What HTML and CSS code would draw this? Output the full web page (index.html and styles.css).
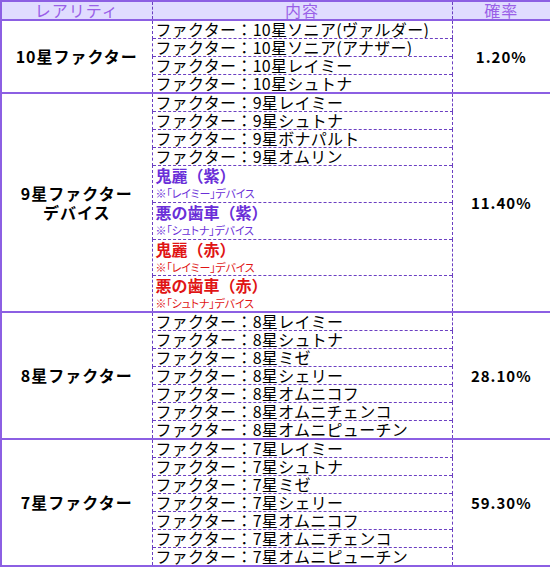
FILE: index.html
```html
<!DOCTYPE html>
<html lang="ja">
<head>
<meta charset="utf-8">
<title>レアリティ</title>
<link rel="stylesheet" href="styles.css">
</head>
<body>
<table class="rarity">
  <colgroup>
    <col class="c1"><col class="c2"><col class="c3">
  </colgroup>
  <thead>
    <tr><th>レアリティ</th><th>内容</th><th>確率</th></tr>
  </thead>
  <tbody>
    <tr><td class="name" rowspan="4">10星ファクター</td><td class="item">ファクター：10星ソニア(ヴァルダー)</td><td class="rate" rowspan="4">1.20%</td></tr>
    <tr><td class="item">ファクター：10星ソニア(アナザー)</td></tr>
    <tr><td class="item">ファクター：10星レイミー</td></tr>
    <tr><td class="item">ファクター：10星シュトナ</td></tr>
  </tbody>
  <tbody>
    <tr><td class="name" rowspan="8">9星ファクター<br>デバイス</td><td class="item">ファクター：9星レイミー</td><td class="rate" rowspan="8">11.40%</td></tr>
    <tr><td class="item">ファクター：9星シュトナ</td></tr>
    <tr><td class="item">ファクター：9星ボナパルト</td></tr>
    <tr><td class="item">ファクター：9星オムリン</td></tr>
    <tr><td class="item dev purple tall"><div class="dev-title">鬼麗（紫）</div><div class="dev-note">※「レイミー」デバイス</div></td></tr>
    <tr><td class="item dev purple tall"><div class="dev-title">悪の歯車（紫）</div><div class="dev-note">※「シュトナ」デバイス</div></td></tr>
    <tr><td class="item dev red"><div class="dev-title">鬼麗（赤）</div><div class="dev-note">※「レイミー」デバイス</div></td></tr>
    <tr><td class="item dev red"><div class="dev-title">悪の歯車（赤）</div><div class="dev-note">※「シュトナ」デバイス</div></td></tr>
  </tbody>
  <tbody>
    <tr><td class="name" rowspan="7">8星ファクター</td><td class="item">ファクター：8星レイミー</td><td class="rate" rowspan="7">28.10%</td></tr>
    <tr><td class="item">ファクター：8星シュトナ</td></tr>
    <tr><td class="item">ファクター：8星ミゼ</td></tr>
    <tr><td class="item">ファクター：8星シェリー</td></tr>
    <tr><td class="item">ファクター：8星オムニコフ</td></tr>
    <tr><td class="item">ファクター：8星オムニチェンコ</td></tr>
    <tr><td class="item">ファクター：8星オムニピューチン</td></tr>
  </tbody>
  <tbody>
    <tr><td class="name" rowspan="7">7星ファクター</td><td class="item">ファクター：7星レイミー</td><td class="rate" rowspan="7">59.30%</td></tr>
    <tr><td class="item">ファクター：7星シュトナ</td></tr>
    <tr><td class="item">ファクター：7星ミゼ</td></tr>
    <tr><td class="item">ファクター：7星シェリー</td></tr>
    <tr><td class="item">ファクター：7星オムニコフ</td></tr>
    <tr><td class="item">ファクター：7星オムニチェンコ</td></tr>
    <tr><td class="item">ファクター：7星オムニピューチン</td></tr>
  </tbody>
</table>
</body>
</html>
```
FILE: styles.css
```css
html, body {
  margin: 0;
  padding: 0;
  background: #ffffff;
}

.rarity {
  border-collapse: collapse;
  table-layout: fixed;
  width: 550px;
  border: 2px solid #8c5fe3;
  font-family: "Noto Sans CJK JP", "DejaVu Sans", sans-serif;
  color: #000;
}

.c1 { width: 151px; }
.c2 { width: 300px; }
.c3 { width: 99px; }

.rarity th {
  background: #e0dcff;
  color: #9a5fe8;
  font-weight: normal;
  font-size: 16px;
  line-height: 17px;
  height: 16px;
  padding: 0;
  text-align: center;
  letter-spacing: 1px;
  border-bottom: 2px solid #8c5fe3;
  border-left: 1px dashed #6b3fc2;
  border-right: 1px dashed #6b3fc2;
}

.rarity tbody {
  border-top: 2px solid #8c5fe3;
}

.rarity td {
  padding: 0;
  vertical-align: middle;
}

.name {
  text-align: center;
  font-weight: bold;
  font-size: 16px;
  line-height: 19px;
  letter-spacing: 1px;
  border-right: 1px dashed #6b3fc2;
}

.rate {
  text-align: center;
  font-weight: bold;
  font-size: 15px;
  letter-spacing: 1px;
  border-left: 1px dashed #6b3fc2;
}

.item {
  padding-left: 3px !important;
  font-size: 16px;
  line-height: 17px;
  height: 17px;
  letter-spacing: 0.3px;
  white-space: nowrap;
  overflow: hidden;
  border-bottom: 1px dashed #6b3fc2;
}

.dev {
  height: 35px;
  letter-spacing: 0;
}

.dev.tall {
  height: 36px;
}

.dev-title {
  font-weight: bold;
  font-size: 16px;
  line-height: 19px;
}

.dev-note {
  font-size: 11px;
  line-height: 16px;
  font-feature-settings: "palt";
  letter-spacing: -0.2px;
}

.tall .dev-note {
  line-height: 17px;
}

.purple { color: #6a2fd8; }
.red { color: #e01414; }
```
